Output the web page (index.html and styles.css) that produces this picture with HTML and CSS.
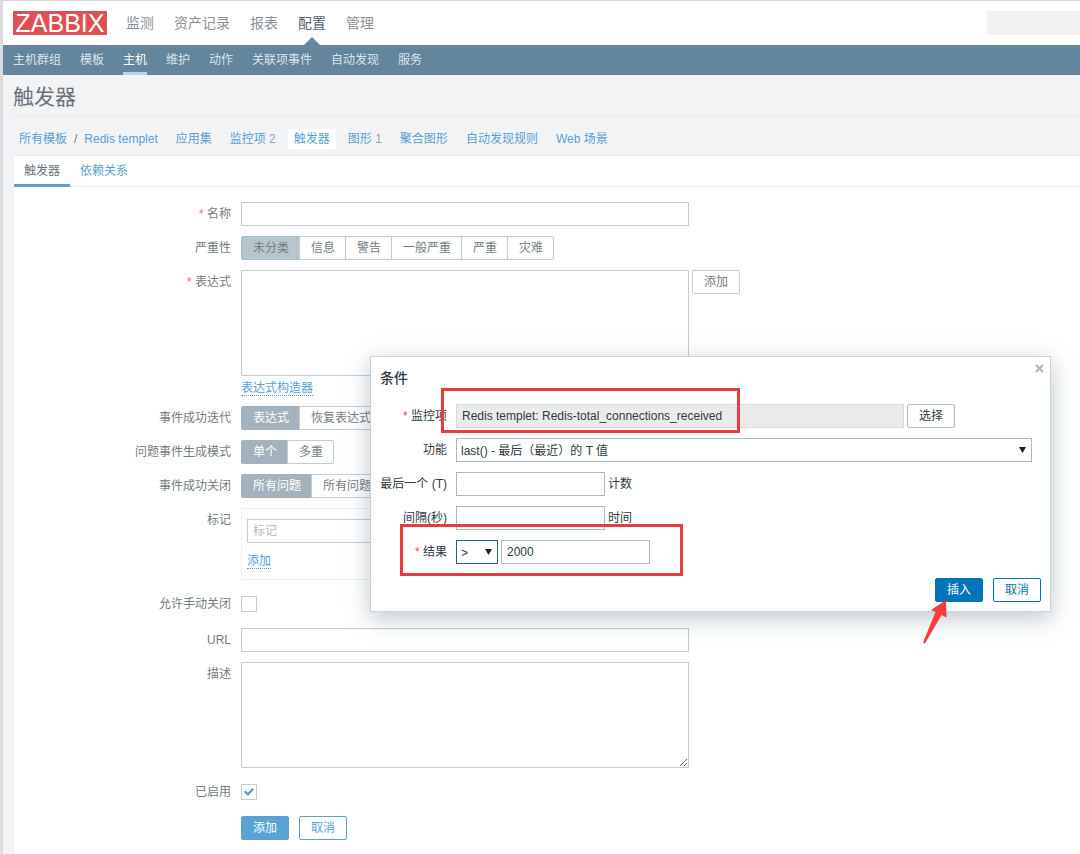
FILE: index.html
```html
<!DOCTYPE html>
<html lang="zh-CN">
<head>
<meta charset="utf-8">
<title>触发器</title>
<link rel="stylesheet" href="styles.css">
</head>
<body>
<div class="page">
  <header class="header">
    <a class="logo" href="#">ZABBIX</a>
    <nav class="topnav">
      <a href="#">监测</a>
      <a href="#">资产记录</a>
      <a href="#">报表</a>
      <a href="#" class="current">配置</a>
      <a href="#">管理</a>
    </nav>
    <input class="search" type="search" aria-label="搜索">
  </header>
  <nav class="subnav">
    <a href="#">主机群组</a>
    <a href="#">模板</a>
    <a href="#" class="current">主机</a>
    <a href="#">维护</a>
    <a href="#">动作</a>
    <a href="#">关联项事件</a>
    <a href="#">自动发现</a>
    <a href="#">服务</a>
  </nav>
  <main class="main">
    <h1 class="title">触发器</h1>
    <nav class="crumbs">
      <span class="crumb"><a href="#">所有模板</a><span class="slash">/</span><a href="#">Redis templet</a></span>
      <span class="crumb"><a href="#">应用集</a></span>
      <span class="crumb"><a href="#">监控项</a> <span class="count">2</span></span>
      <span class="crumb selected"><a href="#">触发器</a></span>
      <span class="crumb"><a href="#">图形</a> <span class="count">1</span></span>
      <span class="crumb"><a href="#">聚合图形</a></span>
      <span class="crumb"><a href="#">自动发现规则</a></span>
      <span class="crumb"><a href="#">Web 场景</a></span>
    </nav>
    <div class="card">
      <div class="tabs">
        <a href="#" class="tab active">触发器</a>
        <a href="#" class="tab">依赖关系</a>
      </div>
      <form class="form">
        <div class="row">
          <label class="label required" for="name">名称</label>
          <input class="text wide" id="name" type="text">
        </div>
        <div class="row">
          <span class="label" id="sev">严重性</span>
          <div class="segments severity" role="radiogroup" aria-labelledby="sev">
            <label><input type="radio" name="sev" checked><span>未分类</span></label>
            <label><input type="radio" name="sev"><span>信息</span></label>
            <label><input type="radio" name="sev"><span>警告</span></label>
            <label><input type="radio" name="sev"><span>一般严重</span></label>
            <label><input type="radio" name="sev"><span>严重</span></label>
            <label><input type="radio" name="sev"><span>灾难</span></label>
          </div>
        </div>
        <div class="row">
          <label class="label required" for="expr">表达式</label>
          <div>
            <div class="inline">
              <textarea class="area wide plain" id="expr"></textarea>
              <button class="btn gray" type="button">添加</button>
            </div>
            <a class="dotted builder" href="#">表达式构造器</a>
          </div>
        </div>
        <div class="row">
          <span class="label" id="rec">事件成功迭代</span>
          <div class="segments" role="radiogroup" aria-labelledby="rec">
            <label><input type="radio" name="rec" checked><span>表达式</span></label>
            <label><input type="radio" name="rec"><span>恢复表达式</span></label>
          </div>
        </div>
        <div class="row">
          <span class="label" id="mode">问题事件生成模式</span>
          <div class="segments" role="radiogroup" aria-labelledby="mode">
            <label><input type="radio" name="mode" checked><span>单个</span></label>
            <label><input type="radio" name="mode"><span>多重</span></label>
          </div>
        </div>
        <div class="row">
          <span class="label" id="close">事件成功关闭</span>
          <div class="segments" role="radiogroup" aria-labelledby="close">
            <label><input type="radio" name="close" checked><span>所有问题</span></label>
            <label><input type="radio" name="close"><span>所有问题</span></label>
          </div>
        </div>
        <div class="row">
          <label class="label" for="tag">标记</label>
          <div class="tags wide">
            <input class="text" id="tag" type="text" placeholder="标记">
            <a class="dotted" href="#">添加</a>
          </div>
        </div>
        <div class="row check-row">
          <label class="label" for="manual">允许手动关闭</label>
          <input class="check" id="manual" type="checkbox">
        </div>
        <div class="row">
          <label class="label" for="url">URL</label>
          <input class="text wide" id="url" type="text">
        </div>
        <div class="row">
          <label class="label" for="desc">描述</label>
          <textarea class="area wide" id="desc"></textarea>
        </div>
        <div class="row check-row">
          <label class="label" for="enabled">已启用</label>
          <input class="check" id="enabled" type="checkbox" checked>
        </div>
        <div class="row">
          <span></span>
          <div class="actions">
            <button class="btn primary" type="button">添加</button>
            <button class="btn" type="button">取消</button>
          </div>
        </div>
      </form>
    </div>
  </main>

  <!-- slivers of the window behind, along the left edge -->
  <svg class="edge" width="3" height="854" aria-hidden="true">
    <path d="M0 80h1.5v4h-1.5zM0 86h2v5h-2z" fill="#2f3e55"/>
    <path d="M0 138h2v2h-2zM1 201h2v1h-2zM1 204h2v1h-2z" fill="#55585c"/>
    <path d="M0 227h1v1h1v3h-2zM0 337h2v1h-1v5h-1zM0 361h2v5h-1v-3h-1zM0 385h1v5h-1z" fill="#8b8f94"/>
    <path d="M0 702h2v16h-2zM0 742h2v38h-2z" fill="#bfc2c6"/>
    <path d="M0 762h1v8h-1zM0 803h3v2h-3z" fill="#3d6c93"/>
    <path d="M0 790h2v6h-1v-4h-1z" fill="#777b80"/>
  </svg>

  <section class="modal" role="dialog" aria-labelledby="modal-title">
    <button class="close" type="button" aria-label="关闭">
      <svg width="9" height="9" viewBox="0 0 9 9"><path d="M1 1L8 8M8 1L1 8" stroke="#b0b5b9" stroke-width="2"/></svg>
    </button>
    <h2 class="modal-title" id="modal-title">条件</h2>
    <form class="modal-form">
      <div class="mrow">
        <label class="label required" for="item">监控项</label>
        <div class="inline">
          <input class="text wide locked" id="item" type="text" readonly value="Redis templet: Redis-total_connections_received">
          <button class="btn gray" type="button">选择</button>
        </div>
      </div>
      <div class="mrow">
        <label class="label" for="func">功能</label>
        <div class="select func">
          <select id="func"><option>last() - 最后（最近）的 T 值</option></select>
        </div>
      </div>
      <div class="mrow">
        <label class="label" for="last">最后一个 (T)</label>
        <div class="inline"><input class="text short" id="last" type="text"><span class="unit">计数</span></div>
      </div>
      <div class="mrow">
        <label class="label" for="shift">间隔(秒)</label>
        <div class="inline"><input class="text short" id="shift" type="text"><span class="unit">时间</span></div>
      </div>
      <div class="mrow">
        <label class="label required" for="value">结果</label>
        <div class="inline">
          <div class="select op"><select aria-label="运算符"><option>&gt;</option></select></div>
          <input class="text short" id="value" type="text" value="2000">
        </div>
      </div>
      <div class="modal-actions">
        <button class="btn primary" type="button">插入</button>
        <button class="btn" type="button">取消</button>
      </div>
    </form>
    <div class="mark mark-item"></div>
    <div class="mark mark-result"></div>
    <svg class="arrow" width="26" height="46" viewBox="0 0 26 46" aria-hidden="true">
      <path d="M23 0L8 10L12.500 12L0 42.500L2 43.500L18.500 15L23.500 17.500Z" fill="#f73c3f"/>
    </svg>
  </section>
</div>
</body>
</html>
```
FILE: styles.css
```css
* { box-sizing: border-box; }
body {
  margin: 0;
  background: #f2f3f5;
  color: #737c83;
  font: 12px/24px "Liberation Sans", "Noto Sans CJK SC", sans-serif;
}
a { color: #5a9fcf; text-decoration: none; }
input, textarea, select, button { font: inherit; color: inherit; margin: 0; }

.page {
  position: relative;
  display: flex;
  flex-direction: column;
  min-height: 100vh;
  border-top: 1px solid #d5d6d7;
  border-left: 3px solid #dadcdf;
  overflow: hidden;
}

/* header */
.header {
  display: flex;
  align-items: center;
  height: 44px;
  padding-left: 10px;
  background: #fff;
}
.logo {
  width: 94px;
  height: 24px;
  background: #df5055;
  color: #fff;
  font-size: 25px;
  line-height: 25px;
  text-align: center;
}
.topnav { display: flex; gap: 20px; margin-left: 19px; font-size: 14px; }
.topnav a { color: #8b9197; line-height: 44px; }
.topnav .current { position: relative; color: #5c656c; }
.topnav .current::after {
  content: "";
  position: absolute;
  left: 6px;
  bottom: 0;
  border: 8px solid transparent;
  border-top: 0;
  border-bottom-color: #63869c;
}
.search {
  width: 93px;
  height: 24px;
  margin-left: auto;
  border: 0;
  background: #f2f2f2;
}
.subnav {
  display: flex;
  gap: 19px;
  height: 30px;
  padding-left: 10px;
  background: #63869c;
}
.subnav a { color: #d9e4ec; line-height: 30px; }
.subnav .current { color: #fff; box-shadow: inset 0 -3px #b3d7f2; }

/* page title and breadcrumbs */
.main { flex: 1; display: flex; flex-direction: column; padding-left: 10px; }
.title {
  margin: 0;
  padding-top: 3px;
  border-bottom: 1px solid #e9ebed;
  color: #6a7279;
  font-size: 21px;
  font-weight: 400;
  line-height: 38px;
}
.crumbs { display: flex; gap: 6px; padding: 12px 0 6px; }
.crumb { padding: 0 6px; line-height: 20px; }
.crumb.selected { background: #fff; }
.slash { padding: 0 7px; }
.count { color: #8fa3b3; }

/* form card */
.card {
  flex: 1;
  margin-left: 1px;
  padding-bottom: 14px;
  border-top: 1px solid #e9ecee;
  background: #fff;
}
.tabs { display: flex; height: 31px; border-bottom: 1px solid #ebeef0; }
.tab { padding: 0 10px; line-height: 30px; }
.tab.active { height: 31px; color: #6a7279; box-shadow: inset 0 -3px #5a9fcf; }
.form { display: grid; gap: 10px; padding-top: 15px; }
.row {
  display: grid;
  grid-template-columns: 217px 1fr;
  gap: 10px;
  min-height: 24px;
}
.label { text-align: right; }
.required::before { content: "* "; color: #e07a7c; }
.inline { display: flex; align-items: flex-start; gap: 3px; }
.wide { width: 448px; }
.text {
  height: 24px;
  padding: 0 5px;
  border: 1px solid #c3cdd4;
  background: #fff;
}
.text::placeholder { color: #b4b9bd; }
.area {
  display: block;
  height: 106px;
  padding: 4px 5px;
  border: 1px solid #c3cdd4;
  background: #fff;
}
.plain { resize: none; }
.dotted { border-bottom: 1px dotted #5a9fcf; line-height: 14px; }
.builder { display: block; width: fit-content; margin-top: 5px; }

.btn {
  height: 24px;
  padding: 0 11px;
  border: 1px solid #5a9fcf;
  border-radius: 2px;
  background: #fff;
  color: #5a9fcf;
  line-height: 22px;
}
.btn.primary { background: #58a3d0; color: #fff; }
.btn.gray { border-color: #c3cdd4; color: #737c83; }

.segments { display: flex; }
.segments input { position: absolute; opacity: 0; }
.segments span {
  display: block;
  height: 24px;
  margin-right: -1px;
  padding: 0 10px 0 11px;
  border: 1px solid #c3cdd4;
  line-height: 22px;
}
.segments label:first-child span { border-radius: 2px 0 0 2px; }
.segments label:last-child span { border-radius: 0 2px 2px 0; }
.segments :checked + span { border-color: #a3b2bc; background: #a3b2bc; color: #fff; }
.severity :checked + span { border-color: #a9b8c0; background: #b7c5cc; color: #737c83; }

.tags {
  display: flex;
  flex-direction: column;
  align-items: flex-start;
  gap: 11px;
  height: 72px;
  padding: 10px 5px;
  border: 1px solid #eff2f4;
}
.tags .text { width: 200px; }

.check-row { min-height: 28px; align-items: center; }
.check {
  appearance: none;
  display: grid;
  place-items: center;
  width: 16px;
  height: 16px;
  border: 1px solid #c3cdd4;
  background: #fff;
}
.check:checked::before {
  content: "";
  width: 10px;
  height: 8px;
  background: #4f9bd0;
  clip-path: polygon(0 50%, 15% 32%, 38% 60%, 85% 0, 100% 18%, 40% 100%);
}
.actions { display: flex; gap: 10px; }

.edge { position: absolute; left: -3px; top: -1px; }

/* condition dialog */
.modal {
  position: absolute;
  left: 367px;
  top: 355px;
  width: 681px;
  padding: 9px 9px 9px 0;
  border: 1px solid #c9d3da;
  background: #fff;
  box-shadow: 0 6px 22px rgba(60, 90, 110, 0.35);
  color: #2f3b43;
}
.close {
  position: absolute;
  top: 7px;
  right: 6px;
  display: flex;
  padding: 0;
  border: 0;
  background: none;
}
.modal-title {
  margin: 0 0 14px 9px;
  font-size: 14px;
  font-weight: 500;
  line-height: 24px;
}
.modal-form { display: grid; gap: 10px; }
.mrow { display: grid; grid-template-columns: 76px 1fr; gap: 9px; height: 24px; }
.modal .required::before { color: #e5484b; }
.modal .text, .modal .btn.gray { border-color: #acbbc2; }
.modal .btn.gray { color: #2f3b43; }
.modal .locked { border-color: #d5dade; background: #ebebeb; }
.short { width: 149px; }
.select { position: relative; display: flex; }
.select select {
  appearance: none;
  width: 100%;
  height: 24px;
  padding: 0 4px;
  border: 1px solid #acbbc2;
  border-radius: 0;
  background: #fff;
}
.select::after {
  content: "";
  position: absolute;
  right: 6px;
  top: 9px;
  width: 7px;
  height: 6px;
  background: #222;
  clip-path: polygon(0 0, 100% 0, 50% 100%);
  pointer-events: none;
}
.func { margin-right: 9px; }
.op { width: 42px; }
.modal .op select { border-color: #1f6595; }
.modal-actions { display: flex; justify-content: flex-end; gap: 10px; margin-top: 4px; }
.modal .modal-actions .btn { border-color: #0275b8; color: #0275b8; }
.modal .modal-actions .primary { background: #0275b8; color: #fff; }

/* annotations on the dialog */
.mark { position: absolute; border: 3px solid #e93c40; pointer-events: none; }
.mark-item { left: 70px; top: 31px; width: 299px; height: 45px; }
.mark-result { left: 29px; top: 167px; width: 283px; height: 52px; }
.arrow { position: absolute; left: 552px; top: 243px; pointer-events: none; }
```
